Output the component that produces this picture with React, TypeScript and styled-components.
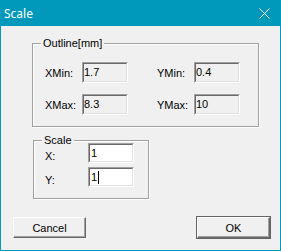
import React from 'react';
import styled, { createGlobalStyle } from 'styled-components';

const GlobalStyle = createGlobalStyle`
  html, body {
    margin: 0;
    padding: 0;
    background: #f0f0f0;
  }
`;

const Window = styled.div`
  width: 281px;
  height: 251px;
  box-sizing: border-box;
  border: 1px solid #0099bc;
  border-top: none;
  background: #f0f0f0;
  display: flex;
  flex-direction: column;
  font-family: 'Liberation Sans', Arial, sans-serif;
  font-size: 11px;
  color: #000;
`;

const TitleBar = styled.div`
  height: 26px;
  flex: none;
  background: #0099bc;
  display: flex;
  align-items: center;
  justify-content: space-between;
  padding: 0 10px 0 3px;
  color: #fff;
  font-family: 'Noto Sans', sans-serif;
  font-size: 12px;
`;

const CloseIcon = () => (
  <svg width="11" height="11" viewBox="0 0 11 11">
    <path d="M0.5 0.5 L10.5 10.5 M10.5 0.5 L0.5 10.5" stroke="#fff" strokeWidth="1" fill="none" />
  </svg>
);

const Body = styled.div`
  flex: 1;
  display: flex;
  flex-direction: column;
  padding: 17px 9px 0 11px;
`;

const Group = styled.div<{ $left: number; $width: number; $height: number; $top: number }>`
  position: relative;
  box-sizing: border-box;
  margin-left: ${p => p.$left}px;
  margin-top: ${p => p.$top}px;
  width: ${p => p.$width}px;
  height: ${p => p.$height}px;
  border: 1px solid #a0a0a0;
  box-shadow: 1px 1px 0 #fff, inset 1px 1px 0 #fff;
`;

const Legend = styled.span`
  position: absolute;
  top: -7px;
  left: 8px;
  padding: 0 2px;
  background: #f0f0f0;
  line-height: 13px;
`;

const OutlineGrid = styled.div`
  display: grid;
  grid-template-columns: 37px 46px 29px 37px 46px;
  grid-auto-rows: 21px;
  row-gap: 11px;
  padding: 18px 0 0 12px;
  align-items: center;
`;

const ScaleGrid = styled.div`
  display: grid;
  grid-template-columns: 43px 46px;
  grid-auto-rows: 20px;
  row-gap: 4px;
  padding: 2px 0 0 11px;
  align-items: center;
`;

const Label = styled.span<{ $shift?: number }>`
  white-space: nowrap;
  padding-top: ${p => p.$shift ?? 1}px;
`;

const TextBox = styled.div<{ $editable?: boolean }>`
  box-sizing: border-box;
  height: 100%;
  border-style: solid;
  border-width: 1px;
  border-color: #a0a0a0 #fff #fff #a0a0a0;
  display: flex;
  align-items: center;
  background: ${p => (p.$editable ? '#fff' : '#f0f0f0')};
`;

const TextInner = styled.div<{ $editable?: boolean }>`
  box-sizing: border-box;
  width: 100%;
  height: 100%;
  border-style: solid;
  border-width: 1px;
  border-color: #696969 #e3e3e3 #e3e3e3 #696969;
  display: flex;
  align-items: center;
  padding-left: ${p => (p.$editable ? 1 : 0)}px;
  line-height: 13px;
`;

const Caret = styled.span`
  display: inline-block;
  width: 1px;
  height: 13px;
  background: #000;
  margin-left: 1px;
`;

const ButtonRow = styled.div`
  display: flex;
  justify-content: space-between;
  margin-top: 17px;
`;

const Button = styled.div<{ $default?: boolean }>`
  box-sizing: border-box;
  width: 75px;
  height: 23px;
  border: 1px solid ${p => (p.$default ? '#646464' : 'transparent')};
  display: flex;
`;

const ButtonFace = styled.div`
  flex: 1;
  display: flex;
  align-items: center;
  justify-content: center;
  border-style: solid;
  border-width: 1px;
  border-color: #fff #696969 #696969 #fff;
  box-shadow: inset -1px -1px 0 #a0a0a0;
  background: #f0f0f0;
`;

const Field = ({ value, editable, caret }: { value: string; editable?: boolean; caret?: boolean }) => (
  <TextBox $editable={editable}>
    <TextInner $editable={editable}>
      {value}
      {caret && <Caret />}
    </TextInner>
  </TextBox>
);

export default function App() {
  return (
    <>
      <GlobalStyle />
      <Window>
        <TitleBar>
          <span>Scale</span>
          <CloseIcon />
        </TitleBar>
        <Body>
          <Group $left={20} $top={0} $width={227} $height={84}>
            <Legend>Outline[mm]</Legend>
            <OutlineGrid>
              <Label>XMin:</Label>
              <Field value="1.7" />
              <span />
              <Label>YMin:</Label>
              <Field value="0.4" />
              <Label>XMax:</Label>
              <Field value="8.3" />
              <span />
              <Label>YMax:</Label>
              <Field value="10" />
            </OutlineGrid>
          </Group>
          <Group $left={21} $top={13} $width={116} $height={59}>
            <Legend>Scale</Legend>
            <ScaleGrid>
              <Label $shift={6}>X:</Label>
              <Field value="1" editable />
              <Label $shift={6}>Y:</Label>
              <Field value="1" editable caret />
            </ScaleGrid>
          </Group>
          <ButtonRow>
            <Button>
              <ButtonFace>Cancel</ButtonFace>
            </Button>
            <Button $default>
              <ButtonFace>OK</ButtonFace>
            </Button>
          </ButtonRow>
        </Body>
      </Window>
    </>
  );
}
